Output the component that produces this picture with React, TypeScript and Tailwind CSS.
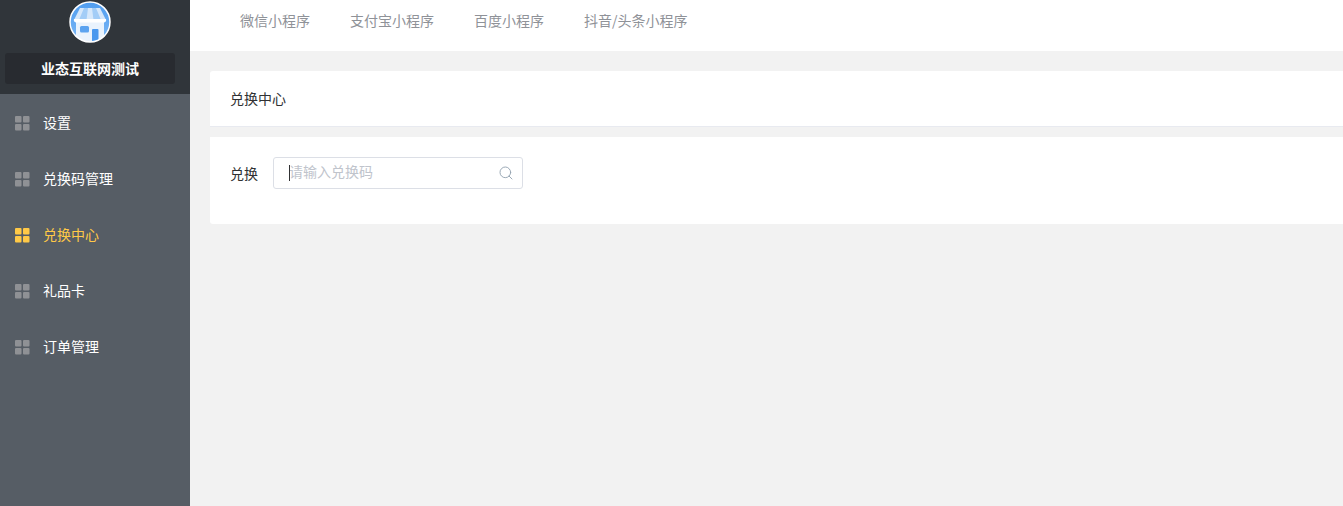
import { Search } from "lucide-react";

const menu = ["设置", "兑换码管理", "兑换中心", "礼品卡", "订单管理"];
const tabs = ["微信小程序", "支付宝小程序", "百度小程序", "抖音/头条小程序"];

function GridIcon({ active }: { active: boolean }) {
  return (
    <svg width="15" height="15" viewBox="0 0 15 15" className={`mt-[2px] ${active ? "fill-[#ffc947]" : "fill-[#8f9195]"}`}>
      <rect x="0" y="0" width="6.5" height="6.5" rx="1" />
      <rect x="8" y="0" width="6.5" height="6.5" rx="1" />
      <rect x="0" y="8" width="6.5" height="6.5" rx="1" />
      <rect x="8" y="8" width="6.5" height="6.5" rx="1" />
    </svg>
  );
}

function ShopLogo() {
  return (
    <svg width="42" height="42" viewBox="0 0 42 42">
      <defs>
        <linearGradient id="sky" x1="0" y1="0" x2="0" y2="1">
          <stop offset="0" stopColor="#4f9df0" />
          <stop offset="1" stopColor="#7db8f5" />
        </linearGradient>
        <clipPath id="disc">
          <circle cx="21" cy="21" r="20" />
        </clipPath>
      </defs>
      <circle cx="21" cy="21" r="20" fill="url(#sky)" />
      <g clipPath="url(#disc)">
        <path d="M7 21h28v21H7z" fill="#eaf3fd" />
        <path d="M11 7h20l6 12H5z" fill="#d6e8fb" />
        <path d="M15 7h4l-1.5 12H10zM23 7h4l5 12h-7.5z" fill="#a3cdf7" />
        <path d="M5 18h32a2.5 2.5 0 0 1-2.5 3.5h-27A2.5 2.5 0 0 1 5 18z" fill="#fff" />
        <rect x="11" y="25" width="9" height="6.5" rx="1.5" fill="#5ba3f0" />
        <rect x="23" y="28" width="6.5" height="14" rx="1" fill="#4a98ee" />
      </g>
      <circle cx="21" cy="21" r="20" fill="none" stroke="#fff" strokeWidth="1.5" />
    </svg>
  );
}

export default function App() {
  return (
    <div className="flex h-[506px] w-[1343px] overflow-hidden bg-[#f2f2f2] font-['Noto_Sans_CJK_SC','Liberation_Sans',sans-serif] text-[14px]">
      <aside className="flex w-[190px] shrink-0 flex-col bg-[#565d65]">
        <div className="flex h-[94px] flex-col items-center bg-[#30353a] pl-[5px] pr-[15px] pt-px">
          <ShopLogo />
          <div className="mt-[10px] flex h-[31px] w-[170px] items-center justify-center rounded-[3px] bg-[#282b30] text-[14px] font-bold text-white">
            业态互联网测试
          </div>
        </div>
        <nav className="flex flex-col">
          {menu.map((item) => {
            const active = item === "兑换中心";
            return (
              <div key={item} className={`flex h-[56px] items-center gap-[13px] pl-[15px] ${active ? "text-[#ffc947]" : "text-white"}`}>
                <GridIcon active={active} />
                <span>{item}</span>
              </div>
            );
          })}
        </nav>
      </aside>

      <main className="flex min-w-0 flex-1 flex-col">
        <div className="flex h-[51px] items-center gap-[40px] bg-white pb-[11px] pl-[50px] text-[#8f9298]">
          {tabs.map((tab) => (
            <span key={tab}>{tab}</span>
          ))}
        </div>
        <div className="pl-[20px] pt-[20px]">
          <div className="flex h-[56px] items-center rounded-tl-[3px] border-b border-[#e8eaf0] bg-white pl-[20px] text-[#303133]">
            兑换中心
          </div>
          <div className="mt-[10px] flex h-[87px] items-start gap-[15px] rounded-bl-[3px] bg-white pl-[20px] pt-[20px] text-[#303133]">
            <label className="leading-[32px]">兑换</label>
            <div className="relative h-[32px] w-[250px]">
              <input
                placeholder="请输入兑换码"
                className="h-full w-full rounded-[3px] border border-[#dcdfe6] bg-white pb-[4px] pl-[15px] pr-[30px] text-[14px] outline-none placeholder:text-[#c0c4cc]"
              />
              <span className="absolute left-[16px] top-[8px] h-[16px] w-px bg-[#303133]" />
              <Search className="absolute right-[9px] top-[8px] h-[16px] w-[16px] text-[#93a3b0]" strokeWidth={1.4} />
            </div>
          </div>
        </div>
      </main>
    </div>
  );
}
